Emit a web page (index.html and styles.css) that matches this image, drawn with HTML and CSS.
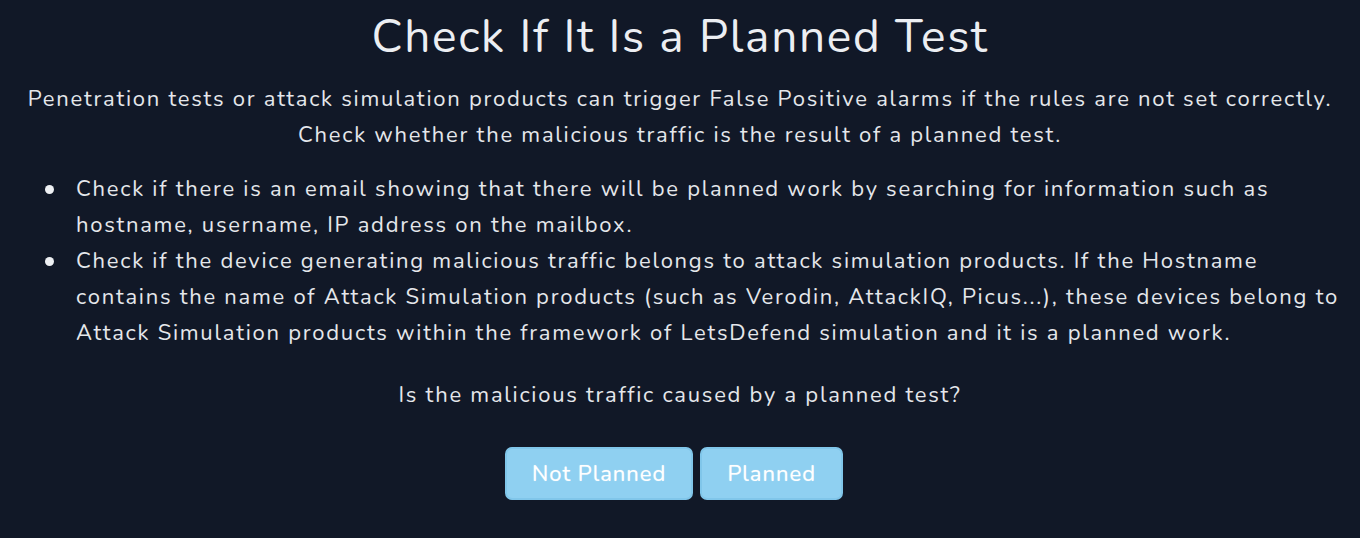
FILE: index.html
```html
<!DOCTYPE html>
<html>
<head>
<meta charset="utf-8">
<link rel="stylesheet" href="styles.css">
</head>
<body>
<main class="panel">
  <h1 class="title">Check If It Is a Planned Test</h1>
  <p class="intro">Penetration tests or attack simulation products can trigger False Positive alarms if the rules are not set correctly.<br>Check whether the malicious traffic is the result of a planned test.</p>
  <ul class="steps">
    <li><span>Check if there is an email showing that there will be planned work by searching for information such as hostname, username, IP address on the mailbox.</span></li>
    <li><span>Check if the device generating malicious traffic belongs to attack simulation products. If the Hostname contains the name of Attack Simulation products (such as Verodin, AttackIQ, Picus...), these devices belong to Attack Simulation products within the framework of LetsDefend simulation and it is a planned work.</span></li>
  </ul>
  <p class="question">Is the malicious traffic caused by a planned test?</p>
  <div class="actions">
    <button class="btn">Not Planned</button>
    <button class="btn">Planned</button>
  </div>
</main>
</body>
</html>
```
FILE: styles.css
```css
html, body {
  margin: 0;
  padding: 0;
  background: #111827;
}
body {
  font-family: "Nunito", "Lato", "Noto Sans", sans-serif;
  color: #e5e7eb;
  height: 538px;
  overflow: hidden;
}
.panel {
  padding: 9px 12px 0 12px;
  display: flex;
  flex-direction: column;
  align-items: center;
}
.title {
  margin: 0;
  font-size: 46px;
  font-weight: 400;
  line-height: 56px;
  letter-spacing: 1.7px;
  color: #eceef2;
}
.intro,
.steps,
.question {
  font-size: 22px;
  line-height: 36px;
  letter-spacing: 1.75px;
}
.intro {
  margin: 16px 0 0 0;
  text-align: center;
}
.steps {
  align-self: stretch;
  margin: 18px 0 0 0;
  padding-left: 33px;
  list-style: none;
}
.steps li {
  display: flex;
  align-items: flex-start;
}
.steps li::before {
  content: "";
  flex: none;
  width: 9px;
  height: 9px;
  border-radius: 50%;
  background: #eef0f3;
  margin-top: 14px;
  margin-right: 22px;
}
.question {
  margin: 26px 0 0 0;
  text-align: center;
}
.actions {
  margin: 34px 12px 0 0;
  display: flex;
  gap: 7px;
}
.btn {
  font-family: inherit;
  font-size: 22px;
  letter-spacing: 1px;
  color: #ffffff;
  text-shadow: 0 0 1px rgba(255, 255, 255, 0.6);
  background: #8fd0f1;
  border: 2px solid #80c6ea;
  border-radius: 7px;
  height: 53px;
  padding: 0 25px;
  cursor: pointer;
}
```
